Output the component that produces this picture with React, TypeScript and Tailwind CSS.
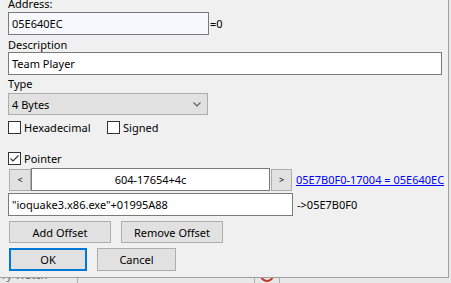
import React from 'react';

type CheckProps = { label: string; checked?: boolean };

const CheckBox = ({ label, checked }: CheckProps) => (
  <div className="flex items-center h-[13px]">
    <div className="w-[13px] h-[13px] border border-[#333] bg-white flex items-center justify-center">
      {checked && (
        <svg width="11" height="11" viewBox="0 0 11 11">
          <polyline points="1.5,5.5 4,8 9.5,2.5" fill="none" stroke="#333" strokeWidth="1.2" />
        </svg>
      )}
    </div>
    <span className="ml-[3px] leading-[15px]">{label}</span>
  </div>
);

const WinButton = ({ label, className = '' }: { label: string; className?: string }) => (
  <div
    className={`flex items-center justify-center bg-[#e1e1e1] border border-[#adadad] leading-[15px] ${className}`}
  >
    {label}
  </div>
);

export default function App() {
  return (
    <div className="w-[451px] h-[283px] bg-[#e8e8e8] overflow-hidden relative text-[11px] text-black font-['Noto_Sans',Arial,sans-serif]">
      <div className="w-[449px] h-[278px] bg-[#f0f0f0] border-r border-b border-[#a0a0a0] pl-[8px] flex flex-col overflow-hidden">
        <div className="mt-[-4px] leading-[15px]">Address:</div>
        <div className="mt-[1px] flex items-center">
          <div className="w-[201px] h-[23px] border border-[#7a7a7a] bg-[#f5f9fd] flex items-center pl-[3px] leading-[15px]">
            05E640EC
          </div>
          <span className="ml-[1px] leading-[15px]">=0</span>
        </div>

        <div className="mt-[2px] leading-[15px]">Description</div>
        <div className="w-[434px] h-[23px] border border-[#7a7a7a] bg-white flex items-center pl-[3px] pb-[1px] leading-[15px]">
          Team Player
        </div>

        <div className="mt-[1px] leading-[15px]">Type</div>
        <div className="mt-[2px] w-[200px] h-[22px] border border-[#adadad] bg-[#e1e1e1] flex items-center justify-between pl-[3px] pr-[6px] leading-[15px]">
          <span>4 Bytes</span>
          <svg width="8" height="5" viewBox="0 0 8 5">
            <polyline points="0.5,0.5 4,4 7.5,0.5" fill="none" stroke="#606060" strokeWidth="1.2" />
          </svg>
        </div>

        <div className="mt-[6px] flex items-center">
          <div className="w-[99px]">
            <CheckBox label="Hexadecimal" />
          </div>
          <CheckBox label="Signed" />
        </div>

        <div className="mt-[18px]">
          <CheckBox label="Pointer" checked />
        </div>

        <div className="mt-[3px] flex items-center h-[23px]">
          <WinButton label="<" className="ml-[1px] w-[22px] h-[22px] text-[9px]" />
          <div className="w-[239px] h-[23px] border border-[#7a7a7a] bg-white flex items-center justify-center leading-[15px]">
            604-17654+4c
          </div>
          <WinButton label=">" className="ml-[1px] w-[21px] h-[22px] text-[9px]" />
          <span className="ml-[4px] text-[#0000ff] underline leading-[15px] whitespace-nowrap">
            05E7B0F0-17004 = 05E640EC
          </span>
        </div>

        <div className="mt-[2px] flex items-center">
          <div className="w-[285px] h-[23px] border border-[#7a7a7a] bg-white flex items-center pl-[3px] leading-[15px]">
            "ioquake3.x86.exe"+01995A88
          </div>
          <span className="ml-[4px] leading-[15px]">-&gt;05E7B0F0</span>
        </div>

        <div className="mt-[5px] flex items-center ml-[1px] gap-[10px]">
          <WinButton label="Add Offset" className="w-[102px] h-[22px]" />
          <WinButton label="Remove Offset" className="w-[102px] h-[22px]" />
        </div>

        <div className="mt-[5px] flex items-center ml-[1px] gap-[10px]">
          <div className="w-[78px] h-[23px] border-2 border-[#0078d7] bg-[#e1e1e1] flex items-center justify-center leading-[15px]">
            OK
          </div>
          <WinButton label="Cancel" className="w-[79px] h-[23px]" />
        </div>
      </div>

      <div className="flex h-[5px] items-start">
        <div className="w-[78px] h-[5px] border-r border-[#adadad] overflow-hidden">
          <span className="block mt-[-9px] ml-[2px] text-[#666] leading-[12px]">ry Watch</span>
        </div>
        <div className="ml-[176px] w-[26px] h-[5px] border-x border-[#adadad] flex justify-center overflow-hidden">
          <div className="w-[14px] h-[14px] rounded-full border-2 border-[#c0392b] mt-[-10px]" />
        </div>
      </div>
    </div>
  );
}
